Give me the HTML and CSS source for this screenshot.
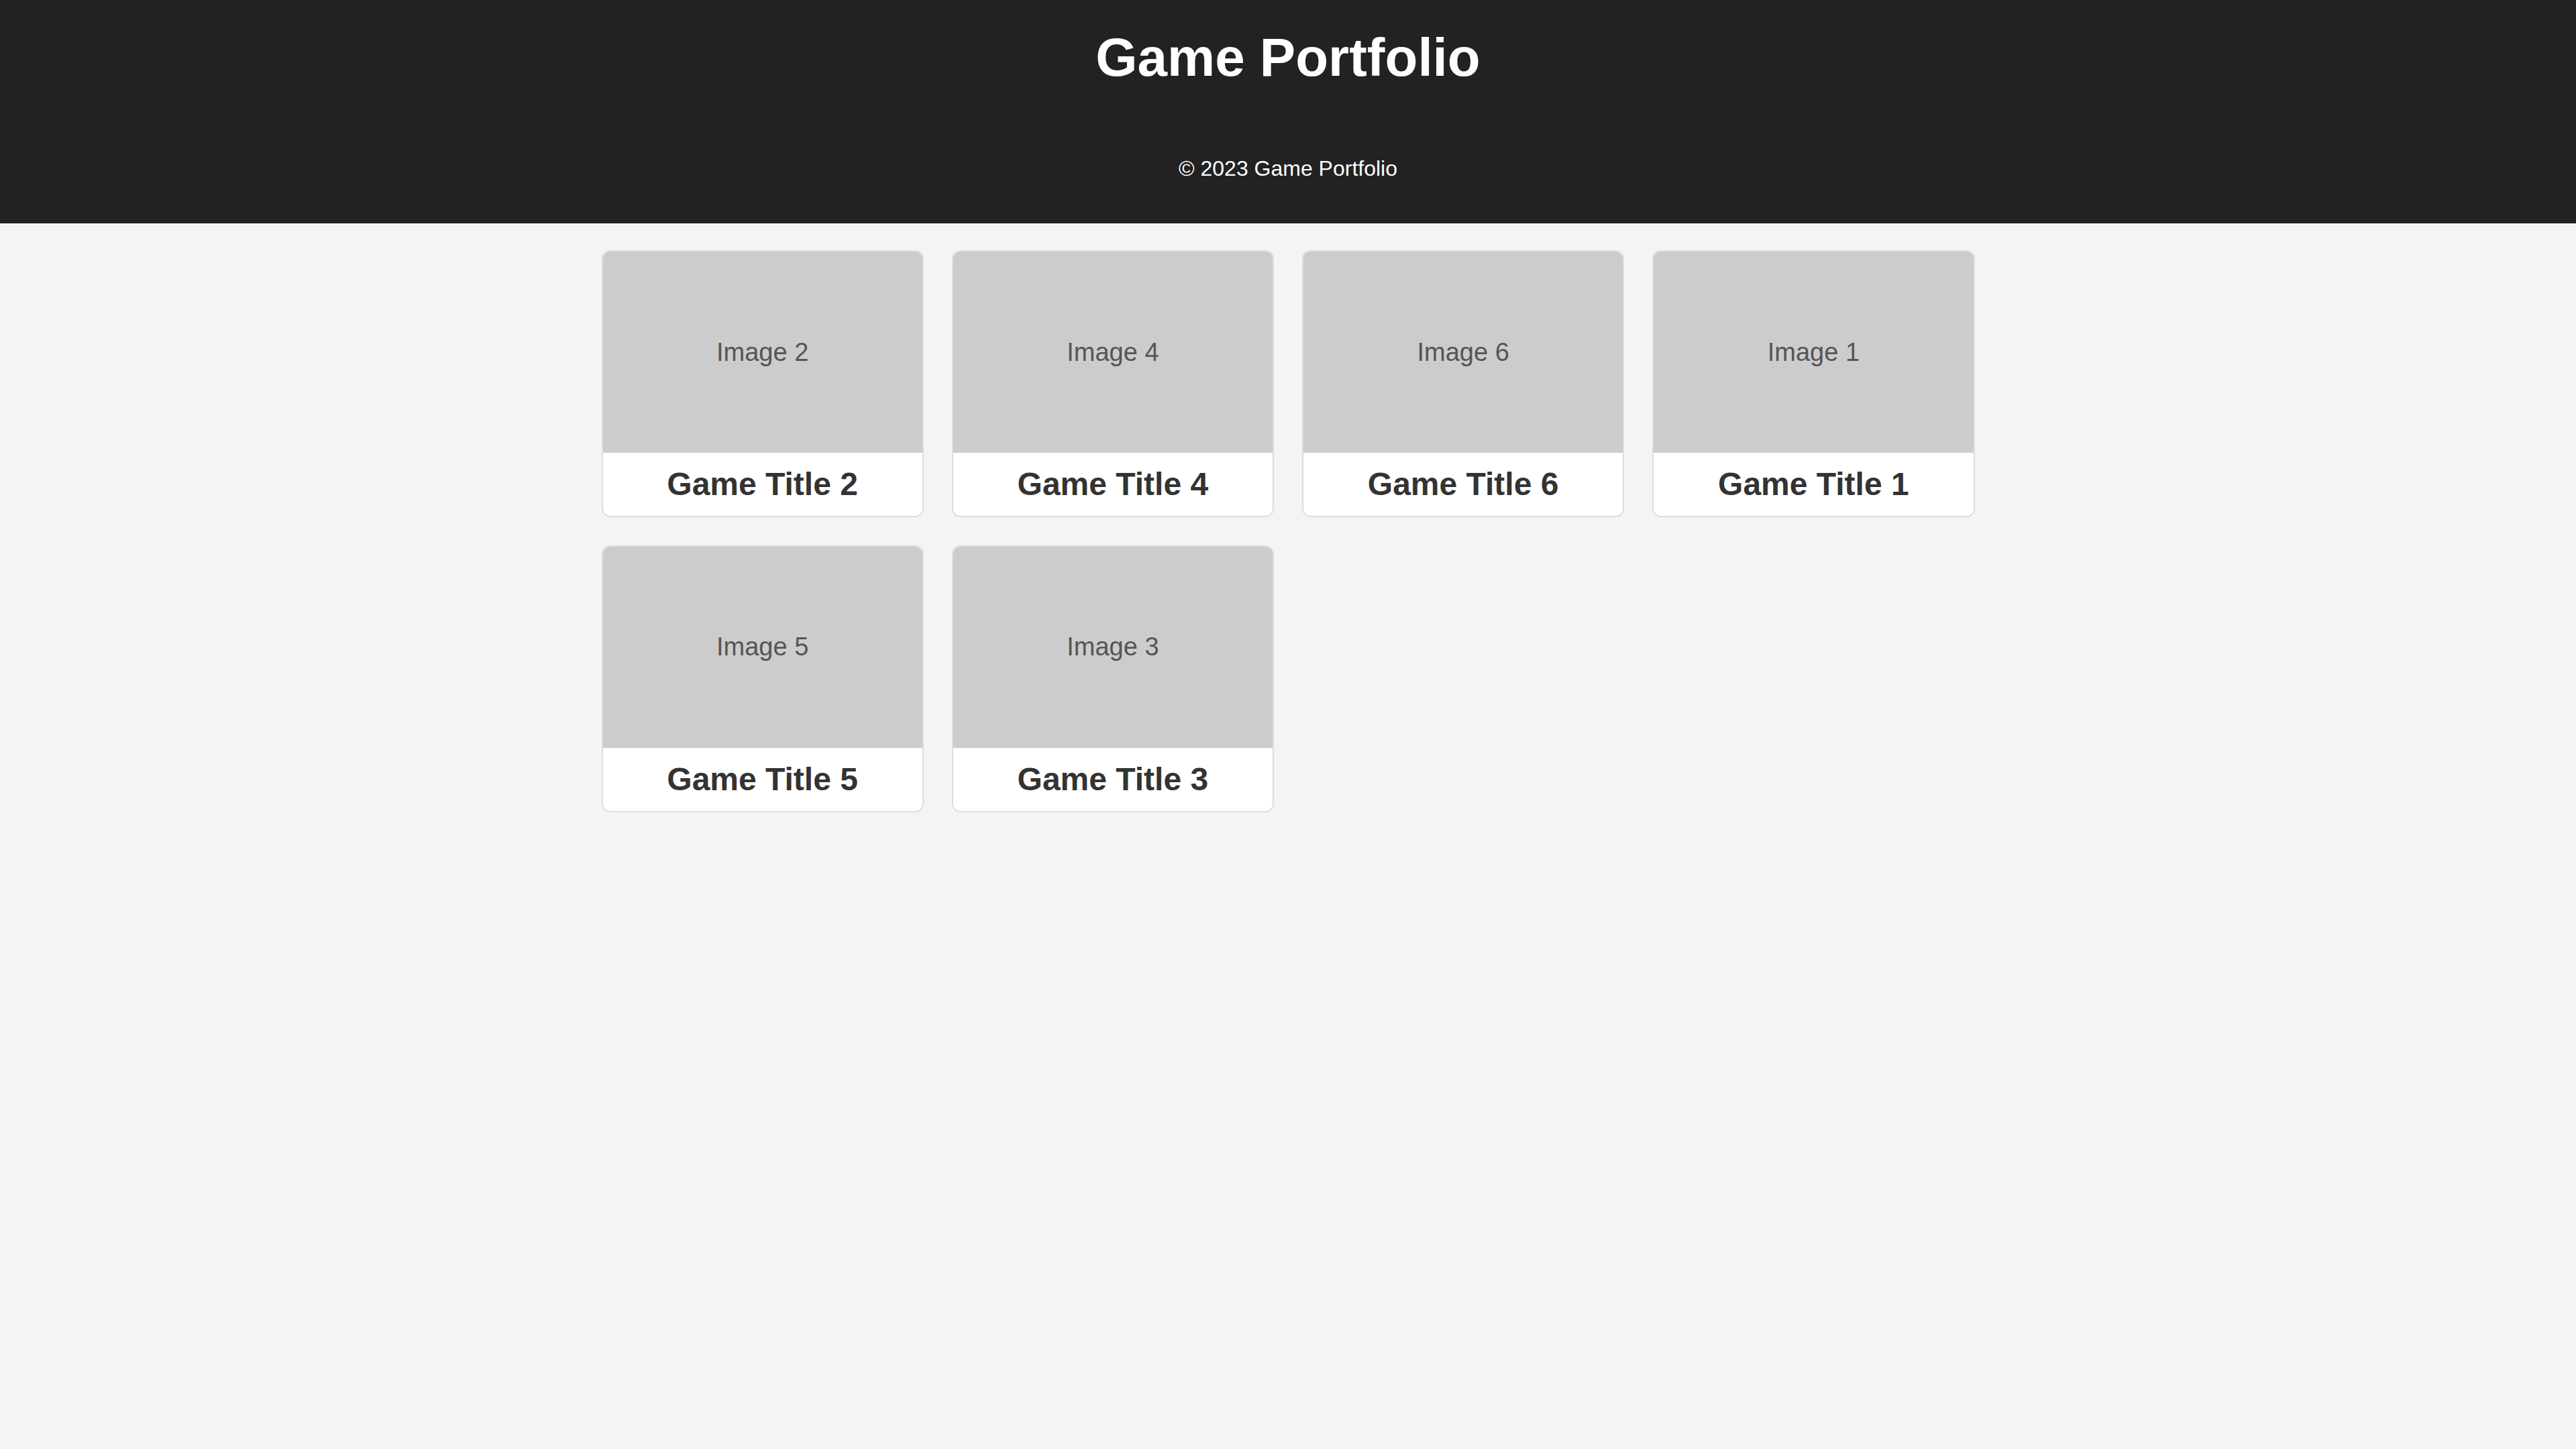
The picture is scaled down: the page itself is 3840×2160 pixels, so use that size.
FILE: index.html
```html
<!DOCTYPE html>
<html lang="en">
<head>
<meta charset="utf-8">
<title>Game Portfolio</title>
<link rel="stylesheet" href="styles.css">
</head>
<body>
<header class="site-header">
  <h1 class="site-title">Game Portfolio</h1>
  <p class="site-copy">&copy; 2023 Game Portfolio</p>
</header>
<main class="gallery">
  <article class="card">
    <div class="card-image">Image 2</div>
    <h3 class="card-title">Game Title 2</h3>
  </article>
  <article class="card">
    <div class="card-image">Image 4</div>
    <h3 class="card-title">Game Title 4</h3>
  </article>
  <article class="card">
    <div class="card-image">Image 6</div>
    <h3 class="card-title">Game Title 6</h3>
  </article>
  <article class="card">
    <div class="card-image">Image 1</div>
    <h3 class="card-title">Game Title 1</h3>
  </article>
  <article class="card">
    <div class="card-image">Image 5</div>
    <h3 class="card-title">Game Title 5</h3>
  </article>
  <article class="card">
    <div class="card-image">Image 3</div>
    <h3 class="card-title">Game Title 3</h3>
  </article>
</main>
</body>
</html>
```
FILE: styles.css
```css
* {
  box-sizing: border-box;
}

html, body {
  margin: 0;
  padding: 0;
}

body {
  background: #f4f4f4;
  font-family: "Liberation Sans", Arial, sans-serif;
  color: #333;
  min-height: 2160px;
}

.site-header {
  background: #222;
  color: #fff;
  text-align: center;
  padding: 40px 0 63px;
}

.site-title {
  margin: 0;
  font-size: 80px;
  font-weight: bold;
  line-height: 92px;
}

.site-copy {
  margin: 101px 0 0;
  font-size: 32px;
  line-height: 37px;
}

.gallery {
  width: 2047px;
  margin: 40px auto 0;
  display: grid;
  grid-template-columns: repeat(4, 1fr);
  column-gap: 42px;
  row-gap: 41.5px;
}

.card {
  background: #fff;
  border: 2px solid #ddd;
  border-radius: 13px;
  overflow: hidden;
  display: flex;
  flex-direction: column;
}

.card-image {
  height: 300px;
  background: #ccc;
  color: #555;
  font-size: 38px;
  display: flex;
  align-items: center;
  justify-content: center;
}

.card-title {
  margin: 0;
  padding: 20px 0;
  font-size: 48px;
  font-weight: bold;
  line-height: 54px;
  text-align: center;
  color: #333;
}
```
